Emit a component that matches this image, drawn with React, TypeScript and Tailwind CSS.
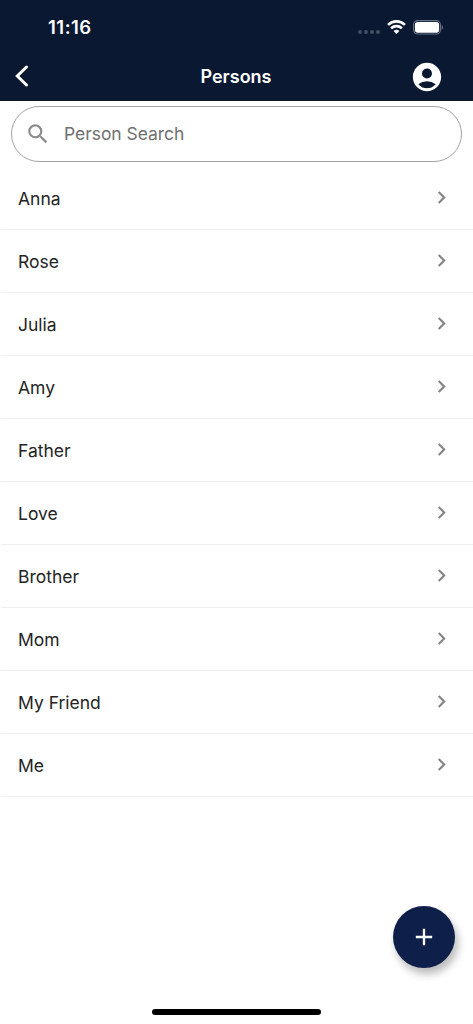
import React from "react";
import { MdAccountCircle, MdAdd, MdChevronRight, MdSearch } from "react-icons/md";

const persons: string[] = [
  "Anna",
  "Rose",
  "Julia",
  "Amy",
  "Father",
  "Love",
  "Brother",
  "Mom",
  "My Friend",
  "Me",
];

const StatusBar: React.FC = () => {
  return (
    <div className="flex h-[54px] items-center justify-between pl-12 pr-[30px] text-white">
      <span className="text-[18.5px] font-semibold leading-6 tracking-[0.5px]">11:16</span>
      <div className="flex items-center">
        <div className="mr-[7px] mt-[10px] flex gap-[2px]">
          <i className="size-1 rounded-full bg-[#434e62]" />
          <i className="size-1 rounded-full bg-[#434e62]" />
          <i className="size-1 rounded-full bg-[#434e62]" />
          <i className="size-1 rounded-full bg-[#434e62]" />
        </div>
        <svg width="19" height="14" viewBox="0 0 19 14" fill="none" stroke="currentColor">
          <path d="M1 4.9C5.8.3 13.2.3 18 4.9" strokeWidth="2.7" />
          <path d="M4.1 8.2c3.1-2.8 7.7-2.8 10.8 0" strokeWidth="2.6" />
          <path d="M9.5 14 6.6 11c1.7-1.6 4.1-1.6 5.8 0z" fill="currentColor" stroke="none" />
        </svg>
        <svg className="ml-[7px]" width="30" height="15" viewBox="0 0 30 15">
          <rect x=".6" y=".6" width="26.8" height="13.4" rx="4" fill="none" stroke="#69738a" strokeWidth="1.1" />
          <rect x="1.9" y="2" width="24.2" height="10.7" rx="2.7" fill="#fff" />
          <path d="M28.6 5v4.8c.9-.4 1.4-1.3 1.4-2.4s-.5-2-1.4-2.4z" fill="#69738a" />
        </svg>
      </div>
    </div>
  );
};

const Header: React.FC = () => {
  return (
    <header className="h-[101px] border-b border-[#101820] bg-[#0a1931]">
      <StatusBar />
      <div className="grid h-[45px] grid-cols-[1fr_auto_1fr] items-center pl-[15px] pr-[29px] text-white">
        <button aria-label="Back" className="-mt-px">
          <svg width="14" height="22" viewBox="0 0 14 22" fill="none" stroke="currentColor" strokeWidth="3">
            <path d="M11.5 2 2.3 11l9.2 9" strokeLinecap="round" />
          </svg>
        </button>
        <h1 className="pl-[13px] text-[18px] font-semibold leading-6">Persons</h1>
        <button aria-label="Account" className="justify-self-end">
          <MdAccountCircle size={34} />
        </button>
      </div>
    </header>
  );
};

const App: React.FC = () => {
  return (
    <div className="relative h-[1024px] w-[473px] overflow-hidden bg-white font-['Inter',sans-serif]">
      <Header />
      <main>
        <label className="ml-[11px] mr-[11px] mt-[5px] flex h-[56px] items-center rounded-full border border-[#a3a3a3] pl-[13px]">
          <MdSearch size={26} color="#8b8b8b" />
          <input
            className="ml-[13px] w-80 pt-px text-[17.5px] tracking-[-0.05px] outline-none placeholder:text-[#707070]"
            placeholder="Person Search"
          />
        </label>
        <ul className="mt-[5px]">
          {persons.map((person) => (
            <li
              key={person}
              className="ml-px flex h-[63px] items-center justify-between border-b border-[#efefef] pl-[17px] pr-[19px] text-[17.5px] text-[#242424]"
            >
              <span className="pt-[2px]">{person}</span>
              <MdChevronRight size={25} color="#858585" className="-mt-[2px]" />
            </li>
          ))}
        </ul>
      </main>
      <button
        aria-label="Add person"
        className="absolute left-[393px] top-[906px] flex size-[62px] items-center justify-center rounded-full bg-[#0e1f49] text-white shadow-[3px_6px_9px_rgba(0,0,0,0.28)]"
      >
        <MdAdd size={28} />
      </button>
      <div className="absolute bottom-[9px] left-[152px] h-[6px] w-[169px] rounded-full bg-black" />
    </div>
  );
};

export default App;
